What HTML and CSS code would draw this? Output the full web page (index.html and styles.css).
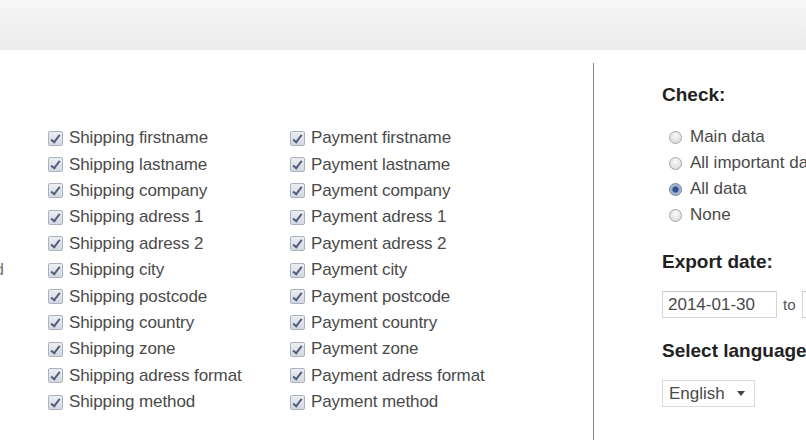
FILE: index.html
```html
<!DOCTYPE html>
<html lang="en">
<head>
<meta charset="utf-8">
<title>Export settings</title>
<link rel="stylesheet" href="styles.css">
</head>
<body>
<div class="topbar"></div>
<div class="main">
  <div class="fields">
    <div class="side"><div class="side-label"><span>Choose fields to be exported</span></div></div>
    <div class="col col-ship">
      <label class="row"><span class="cb"></span>Shipping firstname</label>
      <label class="row"><span class="cb"></span>Shipping lastname</label>
      <label class="row"><span class="cb"></span>Shipping company</label>
      <label class="row"><span class="cb"></span>Shipping adress 1</label>
      <label class="row"><span class="cb"></span>Shipping adress 2</label>
      <label class="row"><span class="cb"></span>Shipping city</label>
      <label class="row"><span class="cb"></span>Shipping postcode</label>
      <label class="row"><span class="cb"></span>Shipping country</label>
      <label class="row"><span class="cb"></span>Shipping zone</label>
      <label class="row"><span class="cb"></span>Shipping adress format</label>
      <label class="row"><span class="cb"></span>Shipping method</label>
    </div>
    <div class="col col-pay">
      <label class="row"><span class="cb"></span>Payment firstname</label>
      <label class="row"><span class="cb"></span>Payment lastname</label>
      <label class="row"><span class="cb"></span>Payment company</label>
      <label class="row"><span class="cb"></span>Payment adress 1</label>
      <label class="row"><span class="cb"></span>Payment adress 2</label>
      <label class="row"><span class="cb"></span>Payment city</label>
      <label class="row"><span class="cb"></span>Payment postcode</label>
      <label class="row"><span class="cb"></span>Payment country</label>
      <label class="row"><span class="cb"></span>Payment zone</label>
      <label class="row"><span class="cb"></span>Payment adress format</label>
      <label class="row"><span class="cb"></span>Payment method</label>
    </div>
  </div>
  <div class="options">
    <h3 class="heading h-check">Check:</h3>
    <div class="radios">
      <label class="rrow"><span class="rb"></span>Main data</label>
      <label class="rrow"><span class="rb"></span>All important data</label>
      <label class="rrow"><span class="rb on"></span>All data</label>
      <label class="rrow"><span class="rb"></span>None</label>
    </div>
    <h3 class="heading h-date">Export date:</h3>
    <div class="dates">
      <span class="input">2014-01-30</span>
      <span class="to">to</span>
      <span class="input">2014-02-28</span>
    </div>
    <h3 class="heading h-lang">Select language:</h3>
    <div class="select"><span>English</span><span class="caret"></span></div>
  </div>
</div>
</body>
</html>
```
FILE: styles.css
```css
html, body {
  margin: 0;
  padding: 0;
  width: 806px;
  height: 440px;
  overflow: hidden;
  background: #fff;
}
body {
  font-family: "Liberation Sans", Arial, sans-serif;
  font-size: 17px;
  color: #4a4a4a;
}
.topbar {
  height: 50px;
  background: linear-gradient(#f7f7f7, #ebebeb);
}
.main {
  display: flex;
  margin-top: 13px;
  height: 377px;
}
.fields {
  display: flex;
  width: 593px;
  flex: none;
  padding-top: 62px;
}
.side {
  width: 48px;
  flex: none;
  padding-top: 132px;
}
.side-label {
  width: 4px;
  height: 26.4px;
  overflow: hidden;
  display: flex;
  justify-content: flex-end;
  align-items: center;
  white-space: nowrap;
  color: #777;
}
.col {
  display: flex;
  flex-direction: column;
}
.col-ship { width: 242px; flex: none; }
.row {
  height: 26.4px;
  display: flex;
  align-items: center;
  white-space: nowrap;
  letter-spacing: -0.1px;
}
.cb {
  position: relative;
  width: 13px;
  height: 13px;
  margin-right: 6px;
  border: 1px solid #aab1bf;
  border-radius: 2px;
  background: linear-gradient(#eceef2, #d3d8e1);
  flex: none;
}
.cb::after {
  content: "";
  position: absolute;
  left: 4px;
  top: 1px;
  width: 3px;
  height: 8px;
  border-right: 2px solid #52607c;
  border-bottom: 2px solid #52607c;
  transform: rotate(38deg);
}
.options {
  flex: 1;
  border-left: 1px solid #8a8a8a;
  padding: 20px 0 0 68px;
  white-space: nowrap;
}
.heading {
  margin: 0;
  font-size: 19px;
  line-height: 24px;
  font-weight: bold;
  color: #222;
}
.radios {
  margin-top: 17px;
  margin-left: 7px;
}
.rrow {
  height: 26px;
  display: flex;
  align-items: center;
}
.rb {
  width: 11px;
  height: 11px;
  margin-right: 8px;
  border: 1px solid #a6a6a6;
  border-radius: 50%;
  background: radial-gradient(circle at 50% 35%, #fafafa, #d4d4d4);
  flex: none;
}
.rb.on {
  border-color: #6b7f9e;
  background: radial-gradient(circle, #2f4f86 0 2.5px, #8fa4c6 3.5px, #dfe5ee 100%);
}
.h-date { margin-top: 22px; }
.dates {
  margin-top: 17px;
  display: flex;
  align-items: center;
}
.input {
  box-sizing: border-box;
  width: 115px;
  height: 27px;
  padding: 0 5px;
  display: flex;
  align-items: center;
  border: 1px solid #d6d6d6;
  border-top-color: #c4c4c4;
  background: #fff;
  flex: none;
}
.to {
  margin: 0 6px;
  font-size: 15px;
  color: #555;
}
.h-lang { margin-top: 21px; }
.select {
  box-sizing: border-box;
  margin-top: 17px;
  width: 93px;
  height: 27px;
  padding: 0 0 0 6px;
  display: flex;
  align-items: center;
  border: 1px solid #dadada;
  background: #fff;
}
.caret {
  margin-left: 12px;
  width: 0;
  height: 0;
  border-left: 4px solid transparent;
  border-right: 4px solid transparent;
  border-top: 5px solid #444;
}
```
